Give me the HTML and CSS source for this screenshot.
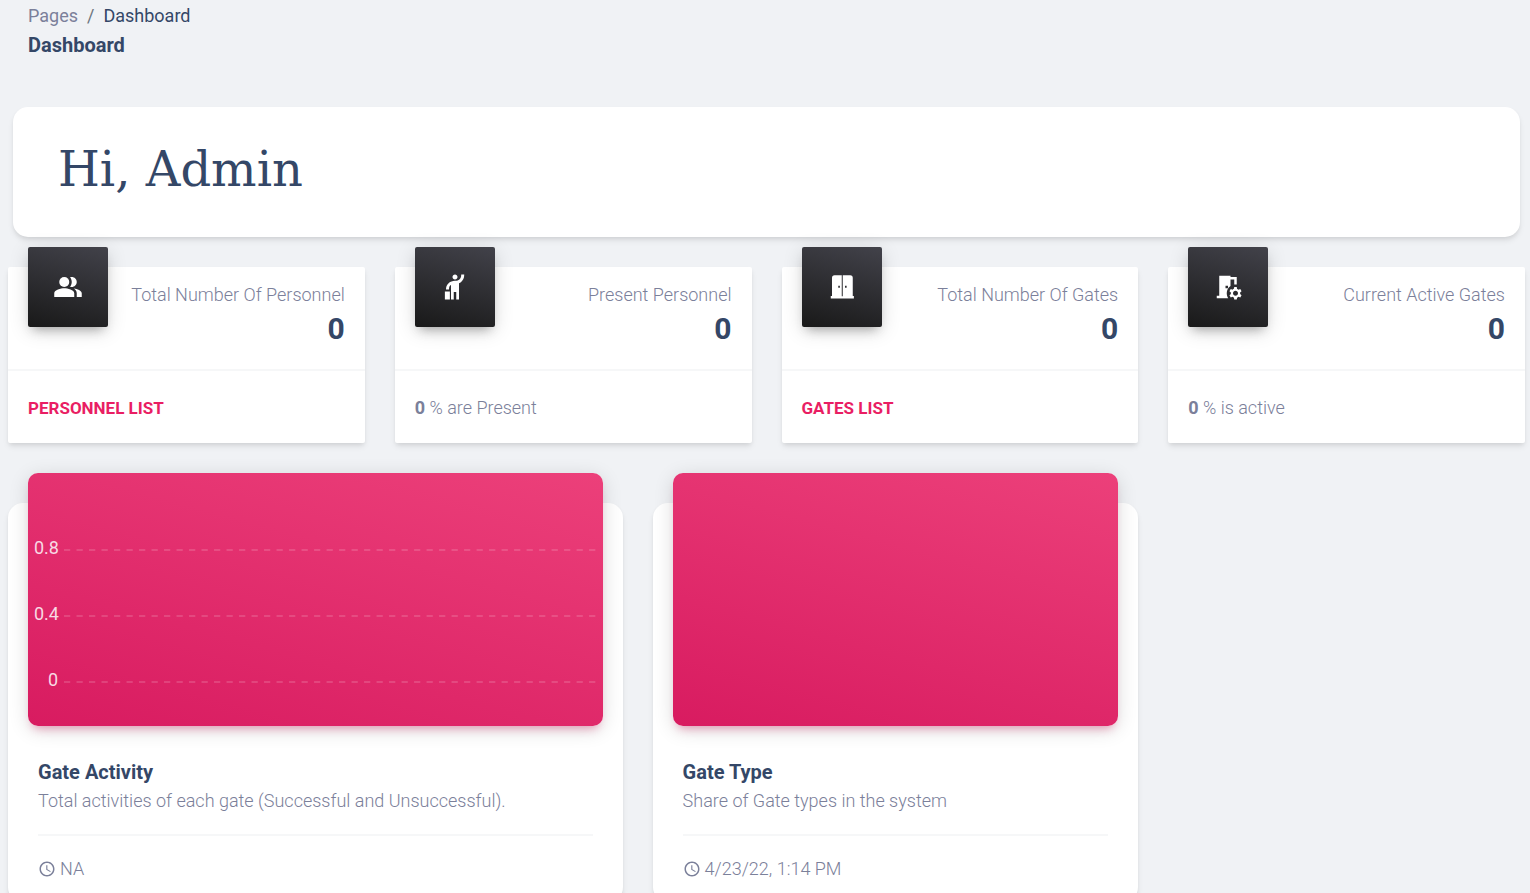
FILE: index.html
```html
<!DOCTYPE html>
<html lang="en">
<head>
<meta charset="utf-8">
<meta name="viewport" content="width=device-width, initial-scale=1">
<title>Dashboard</title>
<link rel="stylesheet" href="styles.css">
</head>
<body>
<header class="topbar">
  <nav aria-label="Breadcrumb">
    <ol class="breadcrumb">
      <li><a href="#pages">Pages</a></li>
      <li class="current" aria-current="page">Dashboard</li>
    </ol>
  </nav>
  <h6 class="page-title">Dashboard</h6>
</header>
<main>
  <section class="hero"><h1>Hi, Admin</h1></section>
  <div class="grid stats">
    <article class="stat">
      <div class="stat-head">
        <span class="stat-icon"><svg viewBox="0 0 24 24" aria-hidden="true"><path d="M16.67 13.13C18.04 14.06 19 15.32 19 17v3h4v-3c0-2.18-3.57-3.47-6.33-3.87z"/><circle cx="9" cy="8" r="4"/><path d="M15 12c2.21 0 4-1.79 4-4s-1.79-4-4-4c-.47 0-.91.1-1.33.24C14.5 5.27 15 6.58 15 8s-.5 2.73-1.33 3.76c.42.14.86.24 1.33.24zM9 13c-2.67 0-8 1.34-8 4v3h16v-3c0-2.66-5.33-4-8-4z"/></svg></span>
        <div class="stat-text"><p>Total Number Of Personnel</p><h4>0</h4></div>
      </div>
      <div class="stat-foot"><a href="#personnel">PERSONNEL LIST</a></div>
    </article>
    <article class="stat">
      <div class="stat-head">
        <span class="stat-icon"><svg viewBox="0 0 24 24" aria-hidden="true"><path d="M12 6c-1.1 0-2-.9-2-2s.9-2 2-2 2 .9 2 2-.9 2-2 2zM17 2h2.400c0 2.900-1 4.700-2.500 5.900-.5.4-1.1.8-1.700 1V22h-2.200v-6h-2v6H8.800V10.300c-.3.1-.4.2-.5.3C7.870 11 7.200 11.600 7.200 14H4.800c0-2.060.5-3.780 2.260-5.290C8.210 7.810 10 7 12 7s2.680-.46 3.480-1.060C15.960 5.550 17 4.760 17 2zM3.900 15.500h4v6.500h-4z"/></svg></span>
        <div class="stat-text"><p>Present Personnel</p><h4>0</h4></div>
      </div>
      <div class="stat-foot"><p><b>0</b> % are Present</p></div>
    </article>
    <article class="stat">
      <div class="stat-head">
        <span class="stat-icon"><svg viewBox="0 0 24 24" aria-hidden="true"><path fill-rule="evenodd" d="M6 2.500h5.800v16.800h.8V2.500h6a2 2 0 0 1 2 2v14.700h.9V21.200H3v-2h1V4.500a2 2 0 0 1 2-2zM9 11v1.500h1.300V11zM14.400 11v1.500h1.300V11z"/></svg></span>
        <div class="stat-text"><p>Total Number Of Gates</p><h4>0</h4></div>
      </div>
      <div class="stat-foot"><a href="#gates">GATES LIST</a></div>
    </article>
    <article class="stat">
      <div class="stat-head">
        <span class="stat-icon"><svg viewBox="0 0 24 24" aria-hidden="true"><path d="M14 11.26V6h3v4h2V4h-5V3H5v16H3v2h9.26c-.79-1.13-1.26-2.51-1.26-4 0-2.38 1.19-4.47 3-5.74zM10 11h2v2h-2v-2zm11.69 5.37 1.14-1-1-1.73-1.45.49c-.32-.27-.68-.48-1.08-.63L19 12h-2l-.3 1.49c-.4.15-.76.36-1.08.63l-1.45-.49-1 1.73 1.14 1c-.08.5-.08.76 0 1.26l-1.14 1 1 1.73 1.45-.49c.32.27.68.48 1.08.63L17 22h2l.3-1.49c.4-.15.76-.36 1.08-.63l1.45.49 1-1.73-1.14-1c.08-.51.08-.77 0-1.27zM18 19c-1.1 0-2-.9-2-2s.9-2 2-2 2 .9 2 2-.9 2-2 2z"/></svg></span>
        <div class="stat-text"><p>Current Active Gates</p><h4>0</h4></div>
      </div>
      <div class="stat-foot"><p><b>0</b> % is active</p></div>
    </article>
  </div>
  <div class="grid charts">
    <article class="chart-card wide">
      <div class="panel">
        <div class="tick"><span>0.8</span><svg aria-hidden="true"><line x1="0" y1="1" x2="100%" y2="1" pathLength="426"/></svg></div>
        <div class="tick"><span>0.4</span><svg aria-hidden="true"><line x1="0" y1="1" x2="100%" y2="1" pathLength="426"/></svg></div>
        <div class="tick"><span>0</span><svg aria-hidden="true"><line x1="0" y1="1" x2="100%" y2="1" pathLength="426"/></svg></div>
      </div>
      <div class="chart-body">
        <h6>Gate Activity</h6>
        <p>Total activities of each gate (Successful and Unsuccessful).</p>
        <hr>
        <p class="time"><svg viewBox="0 0 24 24" aria-hidden="true"><path d="M11.99 2C6.470 2 2 6.480 2 12s4.470 10 9.990 10C17.520 22 22 17.520 22 12S17.520 2 11.990 2zM12 20c-4.420 0-8-3.580-8-8s3.580-8 8-8 8 3.580 8 8-3.580 8-8 8zm.5-13H11v6l5.250 3.150.75-1.230-4.500-2.670z"/></svg>NA</p>
      </div>
    </article>
    <article class="chart-card">
      <div class="panel"></div>
      <div class="chart-body">
        <h6>Gate Type</h6>
        <p>Share of Gate types in the system</p>
        <hr>
        <p class="time"><svg viewBox="0 0 24 24" aria-hidden="true"><path d="M11.99 2C6.470 2 2 6.480 2 12s4.470 10 9.990 10C17.520 22 22 17.520 22 12S17.520 2 11.990 2zM12 20c-4.420 0-8-3.580-8-8s3.580-8 8-8 8 3.580 8 8-3.580 8-8 8zm.5-13H11v6l5.250 3.150.75-1.230-4.500-2.670z"/></svg>4/23/22, 1:14 PM</p>
      </div>
    </article>
  </div>
</main>
</body>
</html>
```
FILE: styles.css
```css
* { box-sizing: border-box; }
body {
  margin: 0;
  background: #f0f2f5;
  color: #7b809a;
  font: 300 18px/26px Roboto, "Open Sans", sans-serif;
}
h1, h4, h6, p, ol { margin: 0; padding: 0; }
a { text-decoration: none; }
h4, h6, h1 { color: #344767; }
h6 { font-size: 20px; line-height: 32px; font-weight: 700; }

.topbar { padding: 3px 28px 0; }
.breadcrumb { display: flex; list-style: none; font-weight: 400; }
.breadcrumb a { color: #7b809a; }
.breadcrumb .current { color: #344767; }
.breadcrumb .current::before { content: "/"; padding: 0 9px; color: #6c757d; }

.hero {
  margin: 46px 10px 0 13px;
  padding: 30px 45px 36px;
  border-radius: 15px;
  background: #fff;
  box-shadow: 0 4px 6px -1px rgba(0, 0, 0, .1), 0 2px 4px -1px rgba(0, 0, 0, .06);
}
.hero h1 { font: 400 48px/64px "Roboto Slab", "DejaVu Serif", serif; }

.grid {
  display: grid;
  grid-template-columns: repeat(12, 1fr);
  column-gap: 30px;
  padding: 0 5px 0 8px;
}
.stats { margin-top: 30px; }
.stat {
  grid-column: span 3;
  background: #fff;
  border-radius: 2px;
  box-shadow: 0 4px 6px -1px rgba(0, 0, 0, .1), 0 2px 4px -1px rgba(0, 0, 0, .06);
}
.stat-head {
  display: flex;
  justify-content: space-between;
  padding: 0 20px;
  height: 102px;
}
.stat-icon {
  display: grid;
  place-items: center;
  width: 80px;
  height: 80px;
  margin-top: -20px;
  border-radius: 2px;
  background: linear-gradient(195deg, #42424a, #191919);
  box-shadow: 0 4px 20px rgba(0, 0, 0, .14), 0 7px 10px -5px rgba(64, 64, 64, .4);
}
.stat-icon svg { width: 30px; height: 30px; fill: #fff; }
.stat-text { padding-top: 15px; text-align: right; }
.stat-text h4 { font-size: 30px; line-height: 41px; font-weight: 700; }
.stat-foot { padding: 24px 20px 22px; border-top: 2px solid #f6f7f8; }
.stat-foot a { color: #e91e63; font-size: 17px; font-weight: 700; }
.stat-foot b { font-weight: 700; }

.charts { margin-top: 60px; }
.chart-card {
  grid-column: span 4;
  padding: 0 20px 20px;
  border-radius: 15px;
  background: #fff;
  box-shadow: 0 4px 6px -1px rgba(0, 0, 0, .1), 0 2px 4px -1px rgba(0, 0, 0, .06);
}
.chart-card.wide { grid-column: span 5; }
.panel {
  display: flex;
  flex-direction: column;
  gap: 40px;
  height: 253px;
  margin-top: -30px;
  padding: 62px 6px 0;
  border-radius: 10px;
  background: linear-gradient(195deg, #ec407a, #d81b60);
  box-shadow: 0 4px 20px rgba(0, 0, 0, .14), 0 7px 10px -5px rgba(233, 30, 99, .4);
}
.tick { display: flex; align-items: center; gap: 6px; color: #f8d9e4; font-weight: 400; }
.tick span { width: 24px; text-align: right; }
.tick svg { flex: 1; min-width: 0; height: 2px; margin-top: 4px; }
.tick line { stroke: #fff; stroke-opacity: .15; stroke-width: 2; stroke-dasharray: 5 5; }
.chart-body { padding: 30px 10px 0; }
.chart-body hr { height: 2px; margin: 20px 0; border: 0; background: #f6f7f8; }
.time { display: flex; align-items: center; gap: 4px; }
.time svg { width: 18px; height: 18px; fill: #7b809a; }
```
